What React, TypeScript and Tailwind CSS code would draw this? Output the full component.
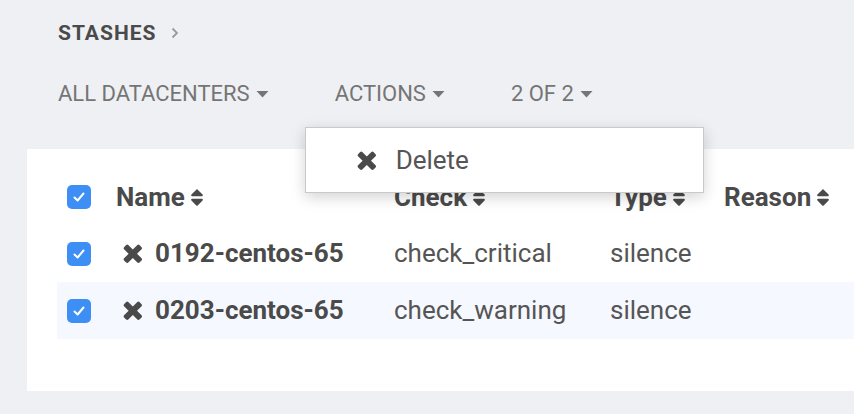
import React from "react";
import { FaSort } from "react-icons/fa";

const font = { fontFamily: "Roboto, 'Liberation Sans', sans-serif" };

function Caret() {
  return (
    <svg width="13" height="8" viewBox="0 0 13 8" className="ml-[6px] inline-block">
      <path d="M0.5 1h12L6.5 7.5z" fill="currentColor" />
    </svg>
  );
}

function TimesIcon({ className }: { className?: string }) {
  return (
    <svg viewBox="70 326 1228 1228" className={className} fill="currentColor">
      <path d="M1298 1322q0 40-28 68l-136 136q-28 28-68 28t-68-28l-294-294-294 294q-28 28-68 28t-68-28l-136-136q-28-28-28-68t28-68l294-294-294-294q-28-28-28-68t28-68l136-136q28-28 68-28t68 28l294 294 294-294q28-28 68-28t68 28l136 136q28 28 28 68t-28 68l-294 294 294 294q28 28 28 68z" />
    </svg>
  );
}

function Checkbox() {
  return (
    <div className="flex h-[24px] w-[24px] items-center justify-center rounded-[5px] bg-[#3d8ff5]">
      <svg width="14" height="14" viewBox="0 0 14 14">
        <path d="M2.5 7.5L5.6 10.5L11.5 3.5" stroke="white" strokeWidth="2" fill="none" strokeLinecap="round" strokeLinejoin="round" />
      </svg>
    </div>
  );
}

const cols = "grid grid-cols-[49px_278px_216px_114px_1fr] items-center";

const rows = [
  { name: "0192-centos-65", check: "check_critical", type: "silence", active: false },
  { name: "0203-centos-65", check: "check_warning", type: "silence", active: true },
];

export default function App() {
  return (
    <div className="h-[414px] w-[854px] overflow-hidden bg-[#eff0f4]" style={font}>
      <div className="flex items-center pl-[58px] pt-[21px] text-[#4a4a4a]">
        <span className="text-[21px] font-bold leading-[24px] tracking-[1px]">STASHES</span>
        <svg width="8" height="12" viewBox="0 0 8 12" className="ml-[15px]">
          <path d="M1.5 1.5l4.5 4.5-4.5 4.5" stroke="#9a9a9a" strokeWidth="1.8" fill="none" />
        </svg>
      </div>

      <div className="mt-[32px] flex h-[33px] items-center gap-[66px] pl-[58px] text-[22px] text-[#757575]">
        <span className="flex items-center">
          ALL DATACENTERS
          <Caret />
        </span>
        <span className="relative flex items-center">
          ACTIONS
          <Caret />
          <div className="absolute left-[-30px] top-[50px] z-10 flex h-[66px] w-[399px] items-center border border-[#c9c9c9] bg-white pl-[51px] shadow-[0_4px_14px_rgba(0,0,0,0.18)]">
            <TimesIcon className="h-[19px] w-[19px] text-[#4a4a4a]" />
            <span className="ml-[20px] text-[26px] text-[#555]">Delete</span>
          </div>
        </span>
        <span className="flex items-center">
          2 OF 2
          <Caret />
        </span>
      </div>

      <div className="ml-[27px] mt-[39px] h-[242px] bg-white pl-[30px] pt-[20px]">
        <div className={`${cols} h-[56px] text-[26px] font-bold text-[#4a4a4a]`}>
          <div className="pl-[10px]">
            <Checkbox />
          </div>
          {["Name", "Check", "Type", "Reason"].map((h) => (
            <div key={h} className="flex items-center pl-[10px]">
              {h}
              <FaSort className="ml-[5px] h-[21px] w-[14px]" />
            </div>
          ))}
        </div>
        {rows.map((r) => (
          <div
            key={r.name}
            className={`${cols} h-[57px] text-[26px] text-[#555] ${r.active ? "bg-[#f5f8ff]" : ""}`}
          >
            <div className="pl-[10px]">
              <Checkbox />
            </div>
            <div className="flex items-center pl-[17px] font-bold text-[#4a4a4a]">
              <TimesIcon className="h-[19px] w-[19px]" />
              <span className="ml-[13px]">{r.name}</span>
            </div>
            <div className="pl-[10px]">{r.check}</div>
            <div className="pl-[10px]">{r.type}</div>
            <div />
          </div>
        ))}
      </div>
    </div>
  );
}
